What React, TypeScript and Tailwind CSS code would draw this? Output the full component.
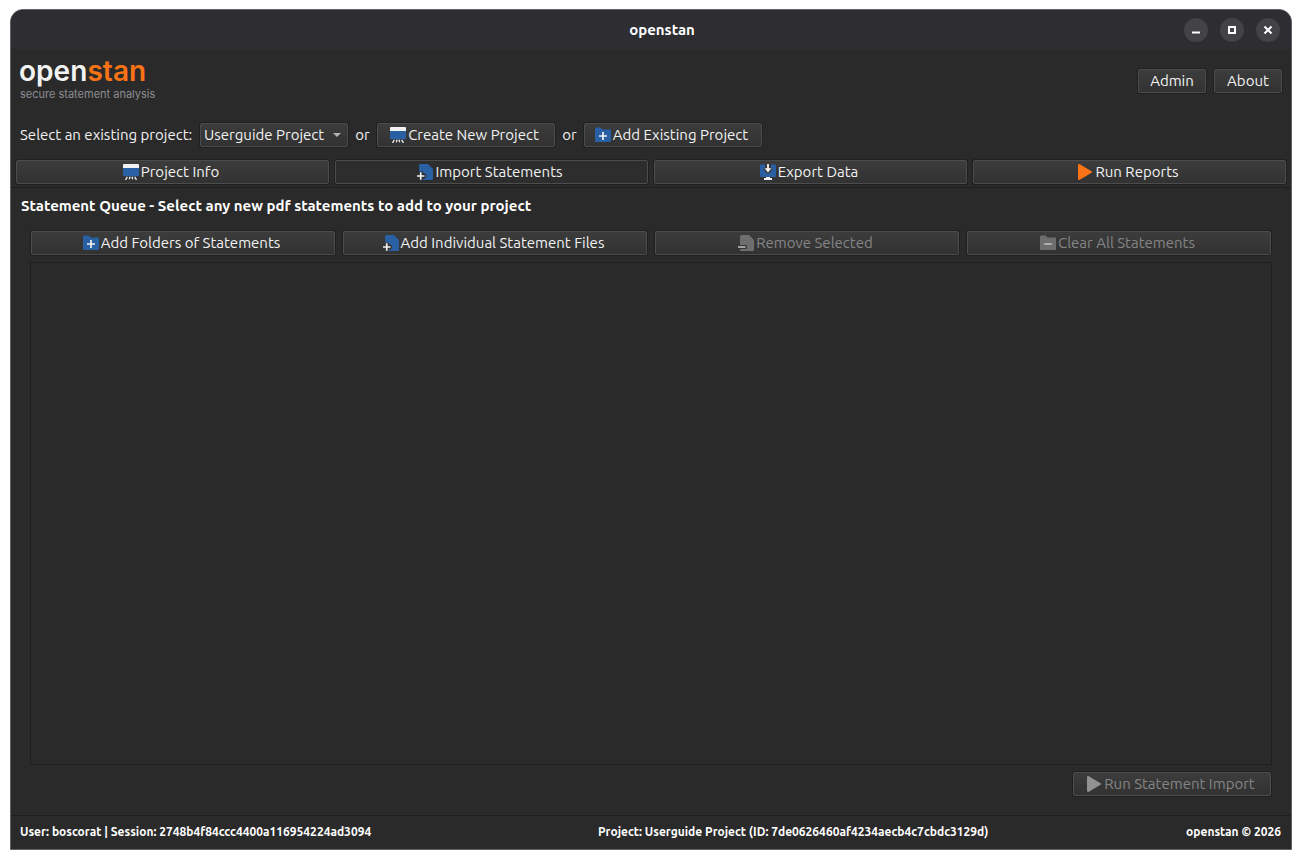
import type { ReactNode } from "react";
import clsx from "clsx";

type IconProps = { disabled?: boolean };

export default function App() {
  return (
    <div className="h-[860px] w-[1302px] overflow-hidden bg-white pt-[9px] pl-[10px] font-['Ubuntu','Noto_Sans',sans-serif] text-[15px] text-[#f2f2f2]">
      <div className="flex h-[841px] w-[1282px] flex-col overflow-hidden rounded-t-[13px] border border-[#626264] bg-[#2a2a2a]">
        <TitleBar />
        <Header />
        <ProjectPicker />
        <Tabs />
        <StatementQueue />
        <StatusBar />
      </div>
    </div>
  );
}

function TitleBar() {
  return (
    <div className="grid h-[39px] shrink-0 grid-cols-[1fr_auto_1fr] items-center bg-[#2d2d32] pr-[11px]">
      <span />
      <span className="pt-px pl-[33px] text-[15px] font-bold text-white">openstan</span>
      <div className="flex justify-end gap-3">
        <WindowButton>
          <path d="M8 14.5h8" strokeWidth="2" />
        </WindowButton>
        <WindowButton>
          <path d="M9 9h6v6H9z" strokeWidth="2" />
        </WindowButton>
        <WindowButton>
          <path d="M8.5 8.5l7 7M15.5 8.5l-7 7" strokeWidth="2" />
        </WindowButton>
      </div>
    </div>
  );
}

function WindowButton({ children }: { children: ReactNode }) {
  return (
    <button className="size-6 rounded-full bg-[#434347]">
      <svg viewBox="0 0 24 24" className="size-6" fill="none" stroke="#fff">
        {children}
      </svg>
    </button>
  );
}

function Header() {
  return (
    <div className="flex h-[63px] shrink-0 items-start justify-between pr-[9px] pl-[8px]">
      <div className="pt-[5px] font-['Inter',sans-serif]">
        <div className="text-[28px] leading-[34px] font-[560] tracking-[0.05px] text-[#f3f3f1]">
          open<span className="text-[#f97316]">stan</span>
        </div>
        <div className="pl-[1px] text-[11px] leading-[12px] text-[#8b8d92]">
          secure statement analysis
        </div>
      </div>
      <div className="flex gap-[8px] pt-[20px]">
        <Button className="w-[68px]">Admin</Button>
        <Button className="w-[68px]">About</Button>
      </div>
    </div>
  );
}

function ProjectPicker() {
  return (
    <div className="flex h-[47px] shrink-0 items-start pt-[11px] pl-[9px] leading-[24px]">
      <span className="w-[180px] whitespace-nowrap">Select an existing project:</span>
      <Button className="w-[148px] justify-between pr-[6px] pl-[3px]">
        <span>Userguide Project</span>
        <svg viewBox="0 0 8 4" className="h-[4px] w-[8px]" fill="#b4b4b4">
          <path d="M0 0h8L4 4z" />
        </svg>
      </Button>
      <span className="w-[29px] text-center">or</span>
      <Button className="w-[178px]" icon={<BoardIcon />}>Create New Project</Button>
      <span className="w-[29px] text-center">or</span>
      <Button className="w-[178px]" icon={<FolderIcon />}>Add Existing Project</Button>
    </div>
  );
}

function Tabs() {
  return (
    <div className="grid h-[29px] shrink-0 grid-cols-4 gap-[6px] border-b border-[#1f1f1f] px-[5px] pt-px">
      <Button icon={<BoardIcon />}>Project Info</Button>
      <Button active icon={<FileIcon />}>Import Statements</Button>
      <Button icon={<ExportIcon />}>Export Data</Button>
      <Button icon={<PlayIcon />}>Run Reports</Button>
    </div>
  );
}

function StatementQueue() {
  return (
    <div className="flex min-h-0 flex-1 flex-col border-b border-[#1f1f1f] px-[19px] pb-[19px]">
      <h1 className="-ml-[9px] h-[43px] pt-[5px] text-[15px] leading-[25px] font-bold text-white">
        Statement Queue - Select any new pdf statements to add to your project
      </h1>
      <div className="grid grid-cols-4 gap-[8px] px-px">
        <Button icon={<FolderIcon />}>Add Folders of Statements</Button>
        <Button icon={<FileIcon />}>Add Individual Statement Files</Button>
        <Button disabled icon={<FileIcon disabled />}>Remove Selected</Button>
        <Button disabled icon={<FolderIcon disabled />}>Clear All Statements</Button>
      </div>
      <div className="mt-[7px] mb-[7px] flex-1 border border-[#1f1f1f]" />
      <div className="flex justify-end pr-px">
        <Button disabled className="w-[198px]" icon={<PlayIcon disabled />}>Run Statement Import</Button>
      </div>
    </div>
  );
}

function StatusBar() {
  return (
    <div className="grid h-[33px] shrink-0 grid-cols-[578px_auto_1fr] items-center pr-[10px] pb-[2px] pl-[9px] text-[12px] font-bold text-white">
      <span>User: boscorat | Session: 2748b4f84ccc4400a116954224ad3094</span>
      <span>Project: Userguide Project (ID: 7de0626460af4234aecb4c7cbdc3129d)</span>
      <span className="text-right">openstan © 2026</span>
    </div>
  );
}

function Button({
  children,
  icon,
  className = "",
  disabled = false,
  active = false,
}: {
  children: ReactNode;
  icon?: ReactNode;
  className?: string;
  disabled?: boolean;
  active?: boolean;
}) {
  return (
    <button
      disabled={disabled}
      className={clsx(
        "flex h-[24px] items-center gap-[2px] rounded-[2px] border border-[#4c4c4c] leading-[22px] whitespace-nowrap shadow-[0_0_0_1px_#202020]",
        !className.includes("justify") && "justify-center",
        icon && "pr-[3px]",
        active ? "bg-[#2d2d2d]" : "bg-linear-to-b from-[#3c3c3c] to-[#323232]",
        disabled && "text-[#858585]",
        className
      )}
    >
      {icon}
      {children}
    </button>
  );
}

function BoardIcon() {
  return (
    <svg viewBox="0 0 16 16" className="size-4 shrink-0">
      <path d="M0 4h16v7.300a1 1 0 0 1-1 1H1a1 1 0 0 1-1-1z" fill="#295fa3" />
      <path d="M1 0h14a1 1 0 0 1 1 1v3H0V1a1 1 0 0 1 1-1z" fill="#f2f2f2" />
      <path
        d="M4.300 12.800L2.500 16M7 12.800l-.7 2.400M9 12.800l.7 2.400M11.700 12.800l1.800 3.200"
        stroke="#e6e6e6"
        strokeWidth="1.400"
      />
    </svg>
  );
}

function FolderIcon({ disabled }: IconProps) {
  return (
    <svg viewBox="0 0 16 16" className="size-4 shrink-0">
      <path
        d="M0 2a1.500 1.500 0 0 1 1.500-1.500h4L7.500 2.500H15a1 1 0 0 1 1 1V14a1 1 0 0 1-1 1H1a1 1 0 0 1-1-1z"
        fill={disabled ? "#6e6e6e" : "#295fa3"}
      />
      <path
        d={disabled ? "M4.200 9h7.600" : "M4 9h8M8 5v8"}
        stroke={disabled ? "#c4c4c4" : "#f2f2f2"}
        strokeWidth="1.700"
      />
    </svg>
  );
}

function FileIcon({ disabled }: IconProps) {
  return (
    <svg viewBox="0 0 16 16" className="size-4 shrink-0">
      <path
        d={
          disabled
            ? "M2 1.500A1.500 1.500 0 0 1 3.500 0H11l5 5v10a1 1 0 0 1-1 1H3.500A1.500 1.500 0 0 1 2 14.500V14h6a1 1 0 0 0 1-1v-2a1 1 0 0 0-1-1H2z"
            : "M2 1.500A1.500 1.500 0 0 1 3.500 0H11l5 5v10a1 1 0 0 1-1 1H6v-1.500h1.500L9 13v-2.500L7.500 9.500H6.500L5.500 7.500H2z"
        }
        fill={disabled ? "#6e6e6e" : "#295fa3"}
      />
      <path
        d={disabled ? "M0 12h7.500" : "M0 12h7.500M3.750 8.250v7.500"}
        stroke={disabled ? "#c4c4c4" : "#f2f2f2"}
        strokeWidth="1.700"
      />
    </svg>
  );
}

function ExportIcon() {
  return (
    <svg viewBox="0 0 16 16" className="size-4 shrink-0">
      <path
        d="M1 .5h4v3L3.500 5.500 8 10l4.500-4.500L11 3.500v-3h4a1 1 0 0 1 1 1V12a1 1 0 0 1-1 1H1a1 1 0 0 1-1-1V1.500a1 1 0 0 1 1-1z"
        fill="#295fa3"
      />
      <path d="M7.100 0h1.800v4.300h2.600L8 8.500 4.500 4.300h2.600z" fill="#f2f2f2" />
      <path d="M6 13h4v1h2v2H4v-2h2z" fill="#f2f2f2" />
    </svg>
  );
}

function PlayIcon({ disabled }: IconProps) {
  return (
    <svg viewBox="0 0 16 16" className="size-4 shrink-0">
      <path
        d="M1 1.200C1 .2 2 -.2 2.800.3l11.700 6.900c.7.400.7 1.200 0 1.600L2.800 15.700c-.8.500-1.800.1-1.800-.9z"
        fill={disabled ? "#919191" : "#f97316"}
      />
    </svg>
  );
}
